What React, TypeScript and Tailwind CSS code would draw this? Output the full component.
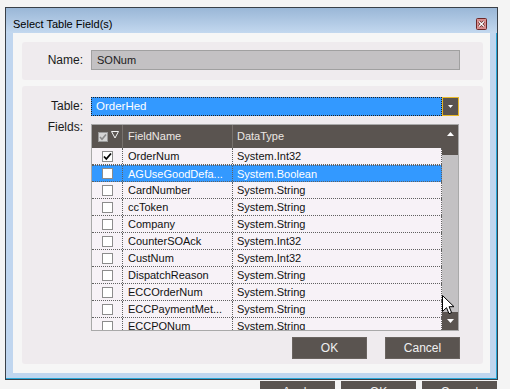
import React from "react";

type Row = { name: string; type: string; checked?: boolean; selected?: boolean };

const rows: Row[] = [
  { name: "OrderNum", type: "System.Int32", checked: true },
  { name: "AGUseGoodDefa...", type: "System.Boolean", selected: true },
  { name: "CardNumber", type: "System.String" },
  { name: "ccToken", type: "System.String" },
  { name: "Company", type: "System.String" },
  { name: "CounterSOAck", type: "System.Int32" },
  { name: "CustNum", type: "System.Int32" },
  { name: "DispatchReason", type: "System.String" },
  { name: "ECCOrderNum", type: "System.String" },
  { name: "ECCPaymentMet...", type: "System.String" },
  { name: "ECCPONum", type: "System.String" },
];

function CheckBox({ checked }: { checked?: boolean }) {
  return (
    <div className="w-[11px] h-[11px] border border-[#8c8c8c] bg-white flex items-center justify-center">
      {checked && (
        <svg width="9" height="9" viewBox="0 0 9 9">
          <path d="M1 4.5 L3.3 7 L8 1.5" fill="none" stroke="#000" strokeWidth="1.8" />
        </svg>
      )}
    </div>
  );
}

function Triangle({ up, w = 7, h = 4 }: { up?: boolean; w?: number; h?: number }) {
  return (
    <svg width={w} height={h} viewBox={`0 0 ${w} ${h}`}>
      <polygon points={up ? `0,${h} ${w / 2},0 ${w},${h}` : `0,0 ${w},0 ${w / 2},${h}`} fill="#fff" />
    </svg>
  );
}

function Field({ label, children, leading }: { label: string; children: React.ReactNode; leading: string }) {
  return (
    <div className="flex items-start">
      <div className={`w-[61px] text-right text-[12px] text-[#1a1a1a] ${leading}`}>{label}</div>
      <div className="ml-[8px]">{children}</div>
    </div>
  );
}

export default function App() {
  return (
    <div className="relative w-[510px] h-[389px] overflow-hidden bg-[#f4f4f4] font-['Liberation_Sans',Arial,sans-serif]">
      {/* buttons of the window behind, mostly hidden below the page edge */}
      <div className="absolute left-[260px] top-[381px] flex gap-[6px]">
        {["Apply", "OK", "Cancel"].map((l) => (
          <div key={l} className="w-[75px] h-[22px] bg-[#5a5450] text-[#f0f0f0] text-[12px] flex items-center justify-center">
            {l}
          </div>
        ))}
      </div>

      {/* dialog window */}
      <div className="absolute left-[5px] top-[7px] w-[493px] h-[373px] border border-[#3a4048] bg-[#c0d6ef] flex flex-col shadow-[inset_-1px_-1px_0_#2aa8d8]">
        <div className="h-[25px] bg-gradient-to-b from-[#9ab7d7] to-[#c3d8ef] flex items-end justify-between pl-[7px] pr-[10px] pb-[3px]">
          <span className="text-[11px] leading-[13px] text-black -mb-[1px]">Select Table Field(s)</span>
          <svg width="11" height="12" viewBox="0 0 11 12">
            <rect x="0.5" y="0.5" width="10" height="11" rx="1" fill="#d98f8f" stroke="#6b2828" />
            <path d="M3 3.5 L8 8.5 M8 3.5 L3 8.5" stroke="#5a2020" strokeWidth="2.6" />
            <path d="M3 3.5 L8 8.5 M8 3.5 L3 8.5" stroke="#fff" strokeWidth="1.4" />
          </svg>
        </div>

        <div className="mx-[7px] h-[340px] bg-[#f6f6f6] pt-[9px] pl-[9px] pr-[7px] pb-[9px] flex flex-col gap-[6px]">
          {/* name panel */}
          <div className="h-[38px] rounded-[3px] bg-[#efebee] pt-[8px]">
            <Field label="Name:" leading="leading-[20px]">
              <div className="w-[369px] h-[20px] bg-[#c3c1c3] border border-[#a0a0a0] pl-[5px] text-[11px] leading-[18px] text-[#202020]">
                SONum
              </div>
            </Field>
          </div>

          {/* table panel */}
          <div className="flex-1 rounded-[3px] bg-[#efebee] pt-[11px] flex flex-col">
            <Field label="Table:" leading="leading-[19px]">
              <div className="w-[368px] h-[19px] flex">
                <div className="flex-1 bg-[#3399ff] border border-dotted border-[#222] pl-[4px] text-[11.5px] leading-[17px] text-white">
                  OrderHed
                </div>
                <div className="w-[17px] h-[19px] bg-[#5a5450] border border-[#e8b828] flex items-center justify-center">
                  <Triangle w={5} h={3} />
                </div>
              </div>
            </Field>

            <div className="mt-[8px] flex items-start">
              <div className="w-[61px] -mt-[3px] text-right text-[12px] leading-[12px] text-[#1a1a1a]">Fields:</div>
              <div className="ml-[8px] w-[368px] h-[207px] border border-[#a9a9a9] flex">
                <div className="w-[350px] flex flex-col overflow-hidden">
                  {/* header */}
                  <div className="h-[23px] shrink-0 bg-[#5a5450] flex text-[11px] leading-[23px] text-[#ece8e4]">
                    <div className="w-[31px] border-r border-[#78726e] flex items-center pl-[6px] gap-[3px]">
                      <div className="w-[10px] h-[10px] border border-[#9a9a9a] bg-[#d4d4d4] flex items-center justify-center">
                        <svg width="8" height="8" viewBox="0 0 8 8">
                          <path d="M1 4 L3 6.3 L7 1.5" fill="none" stroke="#8a8a8a" strokeWidth="1.6" />
                        </svg>
                      </div>
                      <svg width="8" height="8" viewBox="0 0 8 8" className="-mt-[3px]">
                        <polygon points="0.5,0.5 7.5,0.5 4,7" fill="none" stroke="#f4f4f4" strokeWidth="1" />
                      </svg>
                    </div>
                    <div className="w-[110px] border-r border-[#78726e] pl-[5px]">FieldName</div>
                    <div className="flex-1 pl-[4px]">DataType</div>
                  </div>
                  {/* rows */}
                  {rows.map((r) => (
                    <div
                      key={r.name}
                      className={`h-[17px] shrink-0 flex border-b border-dotted border-[#606060] text-[11px] leading-[16px] ${
                        r.selected ? "bg-[#3399ff] text-white border-t border-t-[#606060]" : "bg-[#f7f2f7] text-[#111]"
                      }`}
                    >
                      <div className="w-[31px] border-r border-dotted border-[#606060] flex items-center justify-center">
                        <CheckBox checked={r.checked} />
                      </div>
                      <div className="w-[110px] border-r border-dotted border-[#606060] pl-[5px] whitespace-nowrap overflow-hidden">
                        {r.name}
                      </div>
                      <div className="w-[209px] border-r border-dotted border-[#606060] pl-[4px]">{r.type}</div>
                    </div>
                  ))}
                </div>
                {/* scrollbar */}
                <div className="w-[16px] flex flex-col">
                  <div className="h-[30px] bg-[#5a5450] flex justify-center pt-[7px]">
                    <Triangle up />
                  </div>
                  <div className="flex-1 bg-[#c3c1c3]" />
                  <div className="h-[18px] bg-[#5a5450] flex justify-center pt-[7px]">
                    <Triangle />
                  </div>
                </div>
              </div>
            </div>

            <div className="mt-[6px] flex justify-end gap-[18px] pr-[23px]">
              {["OK", "Cancel"].map((l) => (
                <div
                  key={l}
                  className="w-[75px] h-[22px] bg-[#5a5450] border border-[#6a6460] text-[12px] text-[#f0f0f0] flex items-center justify-center"
                >
                  {l}
                </div>
              ))}
            </div>
          </div>
        </div>
      </div>

      {/* mouse pointer */}
      <svg className="absolute left-[442px] top-[295px]" width="13" height="20" viewBox="0 0 13 20">
        <path d="M0.5 0.5 L0.5 16.5 L4.5 12.7 L7 18.7 L9.6 17.6 L7.1 11.7 L12 11.7 Z" fill="#fff" stroke="#000" strokeWidth="1" />
      </svg>
    </div>
  );
}
